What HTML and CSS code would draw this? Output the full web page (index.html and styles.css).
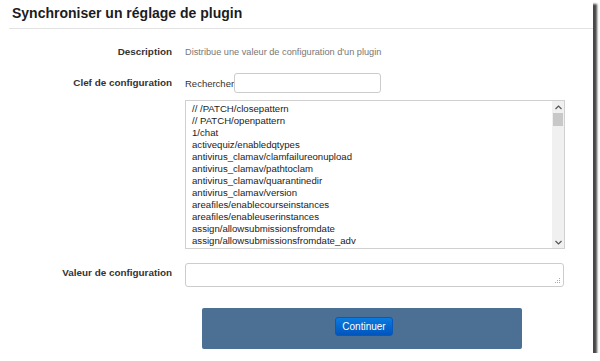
FILE: index.html
```html
<!DOCTYPE html>
<html lang="fr">
<head>
    <meta charset="UTF-8">
    <title>Synchroniser un réglage de plugin</title>
    <link rel="stylesheet" href="styles.css">
</head>
<body>
    <div class="window">
        <div class="header">
            <h2>Synchroniser un réglage de plugin</h2>
        </div>

        <div class="form">
            <!-- description -->
            <div class="row row-desc">
                <div class="label">Description</div>
                <div class="desc">Distribue une valeur de configuration d'un plugin</div>
            </div>

            <!-- clef -->
            <div class="row row-key">
                <div class="label label-key">Clef de configuration</div>
                <div class="field">
                    <div class="search">
                        <span>Rechercher</span>
                        <input type="text" class="search-input">
                    </div>
                    <div class="listbox">
                        <div class="items">
                            <div>// /PATCH/closepattern</div>
                            <div>// PATCH/openpattern</div>
                            <div>1/chat</div>
                            <div>activequiz/enabledqtypes</div>
                            <div>antivirus_clamav/clamfailureonupload</div>
                            <div>antivirus_clamav/pathtoclam</div>
                            <div>antivirus_clamav/quarantinedir</div>
                            <div>antivirus_clamav/version</div>
                            <div>areafiles/enablecourseinstances</div>
                            <div>areafiles/enableuserinstances</div>
                            <div>assign/allowsubmissionsfromdate</div>
                            <div>assign/allowsubmissionsfromdate_adv</div>
                            <div>assign/alwaysshowdescription</div>
                        </div>
                        <div class="scrollbar">
                            <div class="sb-btn">
                                <svg width="7" height="5" viewBox="0 0 7 5"><polyline points="0.5,4 3.5,1 6.5,4" fill="none" stroke="#555" stroke-width="1.2"/></svg>
                            </div>
                            <div class="sb-track">
                                <div class="sb-thumb"></div>
                            </div>
                            <div class="sb-btn">
                                <svg width="7" height="5" viewBox="0 0 7 5"><polyline points="0.5,1 3.5,4 6.5,1" fill="none" stroke="#555" stroke-width="1.2"/></svg>
                            </div>
                        </div>
                    </div>
                </div>
            </div>

            <!-- valeur -->
            <div class="row row-value">
                <div class="label label-value">Valeur de configuration</div>
                <div class="field">
                    <div class="value-box">
                        <textarea class="value-input"></textarea>
                        <svg class="grip" width="6" height="6" viewBox="0 0 6 6">
                            <rect x="4" y="0" width="1" height="1" fill="#aaa"/>
                            <rect x="2" y="2" width="1" height="1" fill="#aaa"/>
                            <rect x="4" y="2" width="1" height="1" fill="#aaa"/>
                            <rect x="0" y="4" width="1" height="1" fill="#aaa"/>
                            <rect x="2" y="4" width="1" height="1" fill="#aaa"/>
                            <rect x="4" y="4" width="1" height="1" fill="#aaa"/>
                        </svg>
                    </div>
                </div>
            </div>

            <div class="actions">
                <button>Continuer</button>
            </div>
        </div>
    </div>
</body>
</html>
```

FILE: styles.css
```css
body {
    margin: 0;
    background-color: white;
    font-family: "Liberation Sans", Arial, sans-serif;
    color: #333;
}
.window {
    width: 593px;
    height: 353px;
    background-color: white;
    box-shadow: 4px 4px 2px rgba(0, 0, 0, 0.72);
}
.header {
    margin-left: 9px;
    padding: 5px 0 7px 3px;
    border-bottom: 1px solid #e2e2e2;
}
.header h2 {
    margin: 0;
    font-size: 14px;
    line-height: 16px;
    color: #1c1c1c;
}
.form {
    padding-top: 17px;
}
.row {
    display: grid;
    grid-template-columns: 172px 380px;
    column-gap: 13px;
}
.label {
    text-align: right;
    font-size: 9.9px;
    font-weight: bold;
    line-height: 12px;
    color: #333;
}
.desc {
    font-size: 9.2px;
    line-height: 12px;
    color: #777;
}
.row-key {
    margin-top: 15px;
}
.label-key {
    line-height: 20px;
}
.search {
    display: flex;
    align-items: center;
    height: 20px;
    font-size: 9.5px;
}
.search-input {
    box-sizing: border-box;
    width: 147px;
    height: 20px;
    margin: 0;
    border: 1px solid #ccc;
    border-radius: 3px;
    outline: none;
}
.listbox {
    display: flex;
    box-sizing: border-box;
    width: 380px;
    height: 149px;
    margin-top: 7px;
    border: 1px solid #d0d0d0;
    background-color: white;
}
.items {
    flex: 1;
    overflow: hidden;
    padding: 2px 0 0 6px;
    font-size: 9.6px;
    line-height: 12px;
    color: #222;
    white-space: nowrap;
}
.scrollbar {
    display: flex;
    flex-direction: column;
    width: 12px;
    background-color: #f0f0f0;
}
.sb-btn {
    display: flex;
    align-items: center;
    justify-content: center;
    height: 12px;
}
.sb-track {
    flex: 1;
}
.sb-thumb {
    height: 13px;
    margin: 0 1px;
    background-color: #c8c8c8;
}
.row-value {
    margin-top: 14px;
}
.label-value {
    padding-top: 4px;
}
.value-box {
    position: relative;
    width: 379px;
}
.value-input {
    display: block;
    box-sizing: border-box;
    width: 379px;
    height: 24px;
    margin: 0;
    border: 1px solid #ccc;
    border-radius: 3px;
    resize: none;
    outline: none;
}
.grip {
    position: absolute;
    right: 3px;
    bottom: 3px;
}
.actions {
    box-sizing: border-box;
    width: 320px;
    height: 41px;
    margin: 21px 0 0 202px;
    padding: 8px 0 0 133px;
    background-color: #4b7093;
    border-radius: 2px;
}
.actions button {
    width: 58px;
    height: 19px;
    padding: 0;
    border: 1px solid #0a58b8;
    border-radius: 3px;
    background: linear-gradient(#0b7bdf, #0155bd);
    color: white;
    font-family: "Liberation Sans", Arial, sans-serif;
    font-size: 10px;
}
```
